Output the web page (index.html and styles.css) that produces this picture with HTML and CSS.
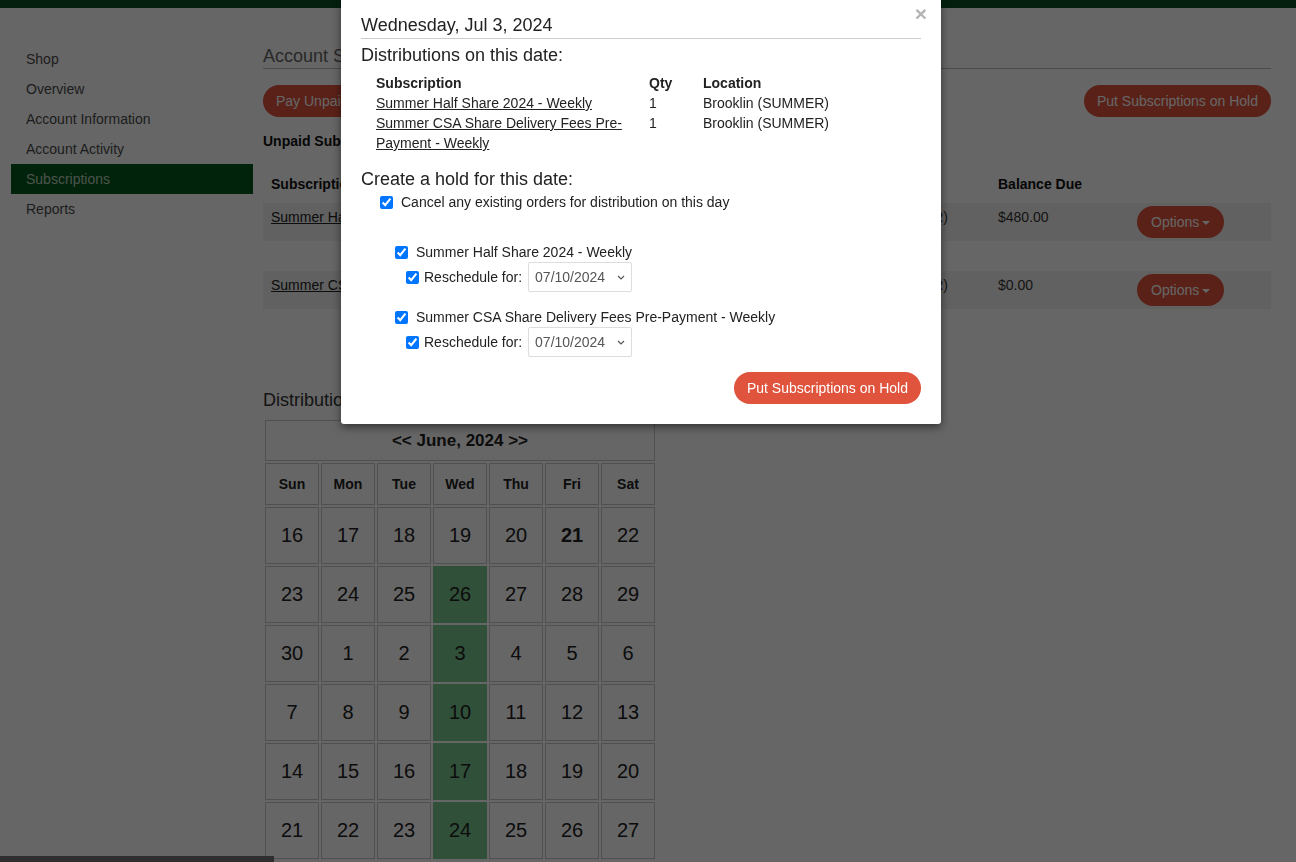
FILE: index.html
```html
<!DOCTYPE html>
<html lang="en">
<head>
    <meta charset="UTF-8">
    <meta name="viewport" content="width=device-width, initial-scale=1.0">
    <title>Account Subscriptions</title>
    <link rel="stylesheet" href="styles.css">
</head>
<body>
    <div class="topbar"></div>

    <div class="page">
        <ul class="sidenav">
            <li><a href="#">Shop</a></li>
            <li><a href="#">Overview</a></li>
            <li><a href="#">Account Information</a></li>
            <li><a href="#">Account Activity</a></li>
            <li class="active"><a href="#">Subscriptions</a></li>
            <li><a href="#">Reports</a></li>
        </ul>

        <div class="main">
            <h2 class="page-title">Account Subscriptions</h2>
            <div class="actions">
                <button class="btn">Pay Unpaid Subscriptions</button>
                <button class="btn">Put Subscriptions on Hold</button>
            </div>

            <h5 class="subhead">Unpaid Subscriptions</h5>
            <table class="subs">
                <colgroup>
                    <col style="width: 300px">
                    <col style="width: 251px">
                    <col style="width: 176px">
                    <col style="width: 139px">
                    <col>
                </colgroup>
                <thead>
                    <tr>
                        <th>Subscription</th>
                        <th>Start Date</th>
                        <th>Location</th>
                        <th>Balance Due</th>
                        <th></th>
                    </tr>
                </thead>
                <tbody>
                    <tr class="row">
                        <td><a href="#">Summer Half Share 2024 - Weekly</a></td>
                        <td>06/05/2024</td>
                        <td>Brooklin (SUMMER)</td>
                        <td>$480.00</td>
                        <td class="opts"><button class="btn btn-opts">Options<span class="caret"></span></button></td>
                    </tr>
                    <tr class="spacer"><td colspan="5"></td></tr>
                    <tr class="row">
                        <td><a href="#">Summer CSA Share Delivery Fees Pre-Payment - Weekly</a></td>
                        <td>06/05/2024</td>
                        <td>Brooklin (SUMMER)</td>
                        <td>$0.00</td>
                        <td class="opts"><button class="btn btn-opts">Options<span class="caret"></span></button></td>
                    </tr>
                </tbody>
            </table>

            <h2 class="cal-title">Distributions</h2>
            <table class="cal">
                <thead>
                    <tr><td colspan="7" class="cal-month">&lt;&lt; June, 2024 &gt;&gt;</td></tr>
                    <tr class="cal-days">
                        <td>Sun</td><td>Mon</td><td>Tue</td><td>Wed</td><td>Thu</td><td>Fri</td><td>Sat</td>
                    </tr>
                </thead>
                <tbody>
                    <tr><td>16</td><td>17</td><td>18</td><td>19</td><td>20</td><td class="today">21</td><td>22</td></tr>
                    <tr><td>23</td><td>24</td><td>25</td><td class="dist-day">26</td><td>27</td><td>28</td><td>29</td></tr>
                    <tr><td>30</td><td>1</td><td>2</td><td class="dist-day">3</td><td>4</td><td>5</td><td>6</td></tr>
                    <tr><td>7</td><td>8</td><td>9</td><td class="dist-day">10</td><td>11</td><td>12</td><td>13</td></tr>
                    <tr><td>14</td><td>15</td><td>16</td><td class="dist-day">17</td><td>18</td><td>19</td><td>20</td></tr>
                    <tr><td>21</td><td>22</td><td>23</td><td class="dist-day">24</td><td>25</td><td>26</td><td>27</td></tr>
                </tbody>
            </table>
        </div>
    </div>

    <div class="footer-bar"></div>

    <div class="backdrop"></div>
    <div class="modal">
        <button class="close">&times;</button>
        <h4 class="modal-title">Wednesday, Jul 3, 2024</h4>

        <h4 class="section-title">Distributions on this date:</h4>
        <table class="dist">
            <colgroup>
                <col style="width: 273px">
                <col style="width: 54px">
                <col>
            </colgroup>
            <thead>
                <tr><th>Subscription</th><th>Qty</th><th>Location</th></tr>
            </thead>
            <tbody>
                <tr>
                    <td><a href="#">Summer Half Share 2024 - Weekly</a></td>
                    <td>1</td>
                    <td>Brooklin (SUMMER)</td>
                </tr>
                <tr>
                    <td><a href="#">Summer CSA Share Delivery Fees Pre-Payment - Weekly</a></td>
                    <td>1</td>
                    <td>Brooklin (SUMMER)</td>
                </tr>
            </tbody>
        </table>

        <h4 class="section-title hold-title">Create a hold for this date:</h4>
        <div class="hold">
            <label class="check"><input type="checkbox" checked>Cancel any existing orders for distribution on this day</label>

            <div class="hold-item">
                <label class="check"><input type="checkbox" checked>Summer Half Share 2024 - Weekly</label>
                <div class="reschedule">
                    <label class="check"><input type="checkbox" checked>Reschedule for:</label>
                    <span class="select-wrap">
                        <select><option>07/10/2024</option><option>07/17/2024</option></select>
                        <svg class="chevron" width="8" height="5" viewBox="0 0 8 5"><path d="M1 1l3 3 3-3" fill="none" stroke="#555" stroke-width="1.2"/></svg>
                    </span>
                </div>
            </div>

            <div class="hold-item">
                <label class="check"><input type="checkbox" checked>Summer CSA Share Delivery Fees Pre-Payment - Weekly</label>
                <div class="reschedule">
                    <label class="check"><input type="checkbox" checked>Reschedule for:</label>
                    <span class="select-wrap">
                        <select><option>07/10/2024</option><option>07/17/2024</option></select>
                        <svg class="chevron" width="8" height="5" viewBox="0 0 8 5"><path d="M1 1l3 3 3-3" fill="none" stroke="#555" stroke-width="1.2"/></svg>
                    </span>
                </div>
            </div>
        </div>

        <div class="modal-footer">
            <button class="btn">Put Subscriptions on Hold</button>
        </div>
    </div>
</body>
</html>
```

FILE: styles.css
```css
body {
    margin: 0;
    font-family: "Liberation Sans", Arial, sans-serif;
    font-size: 14px;
    color: #333;
    background: #fff;
}
.topbar {
    height: 8px;
    background-color: #0c4f22;
}
.page {
    display: flex;
    gap: 10px;
    padding: 36px 25px 0 11px;
}

/* sidebar */
.sidenav {
    list-style: none;
    margin: 0;
    padding: 0;
    width: 242px;
    flex: none;
}
.sidenav a {
    display: block;
    padding: 0 15px;
    line-height: 30px;
    color: #4a4a4a;
    text-decoration: none;
}
.sidenav .active a {
    background-color: #05581c;
    color: #bcd0bf;
}

/* main column */
.main {
    flex: 1;
    padding-top: 1px;
}
.page-title {
    margin: 0;
    font-size: 18px;
    font-weight: normal;
    line-height: 22px;
    color: #666;
    padding-bottom: 1px;
    border-bottom: 1px solid #bbb;
}
.actions {
    display: flex;
    justify-content: space-between;
    margin-top: 16px;
}
.btn {
    background-color: #e0533c;
    color: #fff;
    border: none;
    border-radius: 16px;
    padding: 0 13px;
    height: 32px;
    font-family: inherit;
    font-size: 14px;
    cursor: pointer;
}
.btn-opts {
    padding: 0 14px;
}
.caret {
    display: inline-block;
    width: 0;
    height: 0;
    margin-left: 3px;
    vertical-align: middle;
    border-top: 4px solid #fff;
    border-left: 4px solid transparent;
    border-right: 4px solid transparent;
}
.subhead {
    margin: 14px 0 0;
    font-size: 14px;
    line-height: 20px;
    color: #111;
}
.subs {
    width: 100%;
    margin-top: 20px;
    border-collapse: collapse;
    table-layout: fixed;
}
.subs th {
    text-align: left;
    padding: 3px 8px 9px;
    line-height: 20px;
    color: #111;
}
.subs td {
    padding: 6px 8px;
    line-height: 17px;
    vertical-align: top;
    color: #333;
}
.subs td a {
    color: #222;
    display: block;
    white-space: nowrap;
    overflow: hidden;
}
.subs .row td {
    background-color: #f3f3f3;
    height: 26px;
}
.subs .opts {
    padding: 3px 8px;
}
.subs .spacer td {
    height: 30px;
    padding: 0;
}
.cal-title {
    margin: 80px 0 0;
    font-size: 18px;
    font-weight: normal;
    line-height: 22px;
    color: #333;
}

/* calendar */
.cal {
    margin-top: 7px;
    border-collapse: separate;
    border-spacing: 2px;
    text-align: center;
    color: #222;
}
.cal td {
    border: 1px solid #c8c8c8;
    width: 52px;
    padding: 0;
    font-size: 20px;
    line-height: 55px;
}
.cal .cal-month {
    font-size: 17px;
    font-weight: bold;
    line-height: 39px;
}
.cal .cal-days td {
    font-size: 14px;
    font-weight: bold;
    line-height: 40px;
}
.cal .today {
    font-weight: bold;
}
.cal .dist-day {
    background-color: #79c88e;
    border-color: #79c88e;
}

.footer-bar {
    position: fixed;
    left: 0;
    bottom: 0;
    width: 274px;
    height: 6px;
    background-color: #737373;
}

/* modal */
.backdrop {
    position: fixed;
    inset: 0;
    background: rgba(0, 0, 0, 0.6);
    z-index: 10;
}
.modal {
    position: absolute;
    top: 0;
    left: 341px;
    width: 600px;
    box-sizing: border-box;
    padding: 14px 20px 20px;
    background: #fff;
    border-radius: 0 0 3px 3px;
    box-shadow: 0 3px 9px rgba(0, 0, 0, 0.5);
    z-index: 20;
    color: #222;
}
.close {
    position: absolute;
    top: 4px;
    right: 14px;
    background: none;
    border: none;
    padding: 0;
    font-family: inherit;
    font-size: 21px;
    font-weight: bold;
    line-height: 20px;
    color: #b4b4b4;
    cursor: pointer;
}
.modal-title {
    margin: 0;
    font-size: 18px;
    font-weight: normal;
    line-height: 22px;
    padding-bottom: 2px;
    border-bottom: 1px solid #ccc;
}
.section-title {
    margin: 5px 0 0;
    font-size: 18px;
    font-weight: normal;
    line-height: 22px;
}
.hold-title {
    margin-top: 15px;
}
.dist {
    margin: 7px 0 0 15px;
    border-collapse: collapse;
    table-layout: fixed;
    width: 545px;
}
.dist th,
.dist td {
    padding: 0;
    text-align: left;
    vertical-align: top;
    line-height: 20px;
}
.dist a {
    color: #222;
}
.hold {
    margin-top: 2px;
    padding-left: 15px;
}
.check {
    display: flex;
    align-items: center;
    line-height: 20px;
}
.check input {
    width: 13px;
    height: 13px;
    margin: 0 8px 0 4px;
}
.hold-item {
    padding-left: 15px;
    margin-top: 30px;
}
.hold-item + .hold-item {
    margin-top: 15px;
}
.reschedule {
    display: flex;
    align-items: center;
    gap: 6px;
    padding-left: 11px;
}
.reschedule .check input {
    margin-right: 5px;
}
.select-wrap {
    position: relative;
    display: inline-block;
}
.select-wrap select {
    appearance: none;
    width: 104px;
    height: 30px;
    padding: 0 6px;
    border: 1px solid #ddd;
    border-radius: 2px;
    background: #fff;
    font-family: inherit;
    font-size: 14px;
    color: #555;
}
.chevron {
    position: absolute;
    right: 7px;
    top: 13px;
    pointer-events: none;
}
.modal-footer {
    margin-top: 15px;
    text-align: right;
}
```
